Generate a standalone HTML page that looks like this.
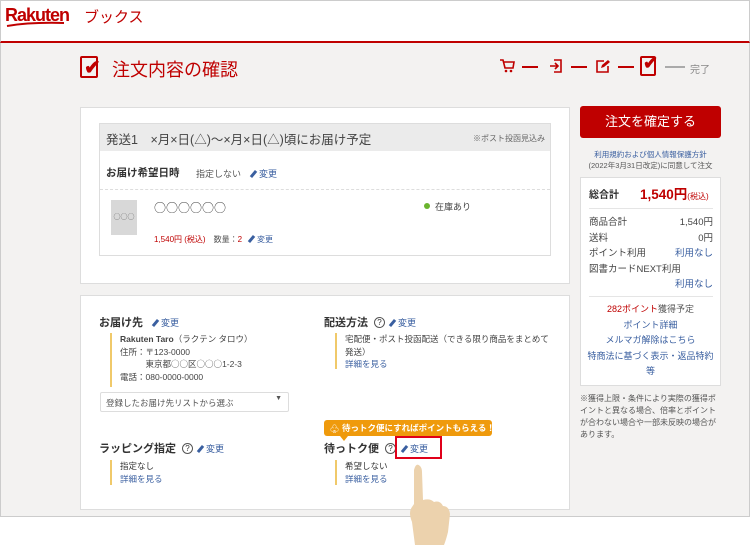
<!DOCTYPE html>
<html><head><meta charset="utf-8"><style>
*{margin:0;padding:0;box-sizing:border-box}
body{width:750px;height:545px;overflow:hidden;font-family:"Liberation Sans","Noto Sans CJK JP",sans-serif;background:#fff;position:relative;color:#333}
.a{position:absolute}
.bl{color:#3a5fa0}
.red{color:#bf0000}
.cjk{font-family:"Noto Sans CJK JP",sans-serif}
.pen{display:inline-block;width:3px;height:8px;background:#3a5fa0;transform:rotate(40deg);margin-right:4px;vertical-align:-1px}
.t{font-size:9px;white-space:nowrap}
.bar{border-left:2px solid #f0c96a;padding-left:8px;font-size:8.5px;line-height:12.5px}
.q{display:inline-block;width:11px;height:11px;border:1px solid #555;border-radius:50%;font-size:8px;line-height:9px;text-align:center;font-weight:normal;vertical-align:1px;margin:0 6px}
</style></head><body>
<div class="a" style="left:0;top:0;width:750px;height:43px;background:#fff;border:1px solid #ccc;border-bottom:2px solid #bf0000"></div>
<div class="a" style="left:5px;top:5px;font-size:18px;font-weight:bold;color:#bf0000;letter-spacing:-1px">Rakuten</div>
<div class="a" style="left:84px;top:6px;font-size:15px;color:#bf0000">ブックス</div>
<svg class="a" style="left:6px;top:20px" width="60" height="8"><path d="M1 6 Q25 2 58 3" fill="none" stroke="#bf0000" stroke-width="2"/></svg>
<div class="a" style="left:0;top:43px;width:750px;height:474px;background:#f3f2f1;border-left:1px solid #ccc;border-right:1px solid #ccc;border-bottom:1px solid #ccc"></div>
<!-- title -->
<div class="a" style="left:80px;top:56px;width:18px;height:22px;border:2px solid #bf0000;border-radius:2px"></div>
<div class="a" style="left:84px;top:55px;font-size:20px;font-weight:bold;color:#bf0000">✔</div>
<div class="a cjk" style="left:112px;top:56px;font-size:18px;color:#bf0000">注文内容の確認</div>
<!-- steps -->
<svg class="a" style="left:499px;top:58px" width="16" height="16"><path d="M1 2h3l2 8h8l1-6H5" fill="none" stroke="#bf0000" stroke-width="1.6"/><circle cx="7" cy="13" r="1.3" fill="#bf0000"/><circle cx="12" cy="13" r="1.3" fill="#bf0000"/></svg>
<div class="a" style="left:522px;top:66px;width:16px;height:1.5px;background:#bf0000"></div>
<svg class="a" style="left:549px;top:59px" width="14" height="14"><path d="M5 1h7v12H5" fill="none" stroke="#bf0000" stroke-width="1.6"/><path d="M1 7h7M6 4l3 3-3 3" fill="none" stroke="#bf0000" stroke-width="1.6"/></svg>
<div class="a" style="left:571px;top:66px;width:16px;height:1.5px;background:#bf0000"></div>
<svg class="a" style="left:596px;top:59px" width="14" height="14"><path d="M8 2H1v11h11V7" fill="none" stroke="#bf0000" stroke-width="1.6"/><path d="M5 9l1-3 6-5 2 2-6 5z" fill="#bf0000"/></svg>
<div class="a" style="left:618px;top:66px;width:16px;height:1.5px;background:#bf0000"></div>
<div class="a" style="left:640px;top:56px;width:16px;height:20px;border:2px solid #bf0000;border-radius:2px"></div>
<div class="a" style="left:643px;top:53px;font-size:18px;font-weight:bold;color:#bf0000">✔</div>
<div class="a" style="left:665px;top:66px;width:20px;height:1.5px;background:#aaa"></div>
<div class="a" style="left:690px;top:61px;font-size:10px;color:#888">完了</div>
<!-- panel 1 -->
<div class="a" style="left:80px;top:107px;width:490px;height:177px;background:#fff;border:1px solid #ddd"></div>
<div class="a" style="left:99px;top:123px;width:452px;height:133px;border:1px solid #ddd"></div>
<div class="a" style="left:100px;top:124px;width:450px;height:27px;background:#ebebeb"></div>
<div class="a" style="left:106px;top:129px;font-size:12.5px;color:#444;white-space:nowrap">発送1　×月×日(△)～×月×日(△)頃にお届け予定</div>
<div class="a t" style="left:473px;top:133px;font-size:8px;color:#666">※ポスト投函見込み</div>
<div class="a" style="left:106px;top:165px;font-size:10.5px;font-weight:bold">お届け希望日時</div>
<div class="a t" style="left:196px;top:167px;color:#555">指定しない</div>
<div class="a t bl" style="left:252px;top:167px"><span class="pen"></span>変更</div>
<div class="a" style="left:100px;top:189px;width:450px;border-top:1px dashed #ddd"></div>
<div class="a cjk" style="left:111px;top:200px;width:26px;height:35px;background:#d8d8d8;font-size:7px;color:#666;text-align:center;line-height:35px">○○○</div>
<div class="a cjk" style="left:154px;top:199px;font-size:12px;color:#444">○○○○○○</div>
<div class="a" style="left:424px;top:203px;width:6px;height:6px;border-radius:50%;background:#6ab42e"></div>
<div class="a t" style="left:435px;top:200px;color:#444">在庫あり</div>
<div class="a t" style="left:154px;top:234px;font-size:8px;color:#bf0000">1,540円 (税込)　<span style="color:#555">数量：</span>2　<span class="bl"><span class="pen"></span>変更</span></div>
<!-- panel 2 -->
<div class="a" style="left:80px;top:295px;width:490px;height:215px;background:#fff;border:1px solid #ddd"></div>
<div class="a" style="left:99px;top:314px;font-size:11px;font-weight:bold;white-space:nowrap">お届け先　<span class="t bl" style="font-weight:normal"><span class="pen"></span>変更</span></div>
<div class="a bar" style="left:110px;top:333px;height:54px;color:#444"><b>Rakuten Taro</b>（ラクテン タロウ）<br>住所：〒123-0000<br>　　　東京都<span class="cjk">○○</span>区<span class="cjk">○○○</span>1-2-3<br>電話：080-0000-0000</div>
<div class="a" style="left:100px;top:392px;width:189px;height:20px;border:1px solid #ddd;border-radius:2px;font-size:8.5px;color:#555;padding:4px 5px">登録したお届け先リストから選ぶ<span style="position:absolute;right:6px;top:2px;font-size:7px">▼</span></div>
<div class="a" style="left:324px;top:314px;font-size:11px;font-weight:bold;white-space:nowrap">配送方法<span class="q">?</span><span class="t bl" style="font-weight:normal"><span class="pen"></span>変更</span></div>
<div class="a bar" style="left:335px;top:333px;width:215px;height:36px;color:#444">宅配便・ポスト投函配送（できる限り商品をまとめて発送）<br><span class="bl">詳細を見る</span></div>
<div class="a" style="left:99px;top:440px;font-size:11px;font-weight:bold;white-space:nowrap">ラッピング指定<span class="q">?</span><span class="t bl" style="font-weight:normal"><span class="pen"></span>変更</span></div>
<div class="a bar" style="left:110px;top:460px;height:25px;color:#333">指定なし<br><span class="bl">詳細を見る</span></div>
<div class="a" style="left:324px;top:420px;width:168px;height:16px;background:#ef9a0c;border-radius:3px;color:#fff;font-size:8.5px;font-weight:bold;padding:2px 0 0 18px;white-space:nowrap">待っトク便にすればポイントもらえる！</div>
<div class="a" style="left:340px;top:436px;border-left:4px solid transparent;border-right:4px solid transparent;border-top:5px solid #ef9a0c"></div>
<div class="a" style="left:330px;top:422px;font-size:9px;color:#fff">♧</div>
<div class="a" style="left:324px;top:440px;font-size:11px;font-weight:bold;white-space:nowrap">待っトク便<span class="q">?</span></div>
<div class="a" style="left:395px;top:436px;width:47px;height:23px;border:2px solid #e0001a"></div>
<div class="a t bl" style="left:403px;top:442px"><span class="pen"></span>変更</div>
<div class="a bar" style="left:335px;top:460px;height:25px;color:#333">希望しない<br><span class="bl">詳細を見る</span></div>
<!-- right -->
<div class="a" style="left:580px;top:106px;width:141px;height:32px;background:#bf0000;border-radius:3px;color:#fff;font-size:13px;text-align:center;line-height:32px">注文を確定する</div>
<div class="a" style="left:580px;top:149px;width:141px;text-align:center;font-size:7.5px;line-height:11px;color:#555"><span class="bl">利用規約および個人情報保護方針</span><br>(2022年3月31日改定)に同意して注文</div>
<div class="a" style="left:580px;top:177px;width:141px;height:209px;background:#fff;border:1px solid #ddd"></div>
<div class="a" style="left:589px;top:186px;font-size:10px;font-weight:bold">総合計</div>
<div class="a" style="left:640px;top:183px;font-size:13.5px;font-weight:bold;color:#bf0000;white-space:nowrap">1,540円<span style="font-size:8px;font-weight:normal">(税込)</span></div>
<div class="a" style="left:589px;top:208px;width:124px;border-top:1px solid #e5e5e5"></div>
<div class="a" style="left:589px;top:215px;width:124px;font-size:9.5px;line-height:15.5px;color:#444">
<div>商品合計<span style="float:right">1,540円</span></div>
<div>送料<span style="float:right">0円</span></div>
<div>ポイント利用<span class="bl" style="float:right">利用なし</span></div>
<div>図書カードNEXT利用</div>
<div style="text-align:right" class="bl">利用なし</div></div>
<div class="a" style="left:589px;top:296px;width:124px;border-top:1px solid #e5e5e5"></div>
<div class="a bl" style="left:582px;top:302px;width:137px;text-align:center;font-size:9px;line-height:15.5px"><span class="red">282ポイント</span><span style="color:#555">獲得予定</span><br>ポイント詳細<br>メルマガ解除はこちら<br>特商法に基づく表示・返品特約<br>等</div>
<div class="a" style="left:580px;top:393px;width:143px;font-size:8px;line-height:12px;color:#555">※獲得上限・条件により実際の獲得ポイントと異なる場合、倍率とポイントが合わない場合や一部未反映の場合があります。</div>
<!-- hand -->
<svg class="a" style="left:400px;top:462px" width="55" height="83"><path d="M15 83 L12 60 Q8 50 12 45 L14 42 L14 8 Q16 0 20 4 Q22 6 22 10 L23 38 Q30 36 34 40 Q40 38 43 44 Q49 44 50 52 L48 70 Q46 78 44 83 Z" fill="#ecd2ad"/></svg>
</body></html>
